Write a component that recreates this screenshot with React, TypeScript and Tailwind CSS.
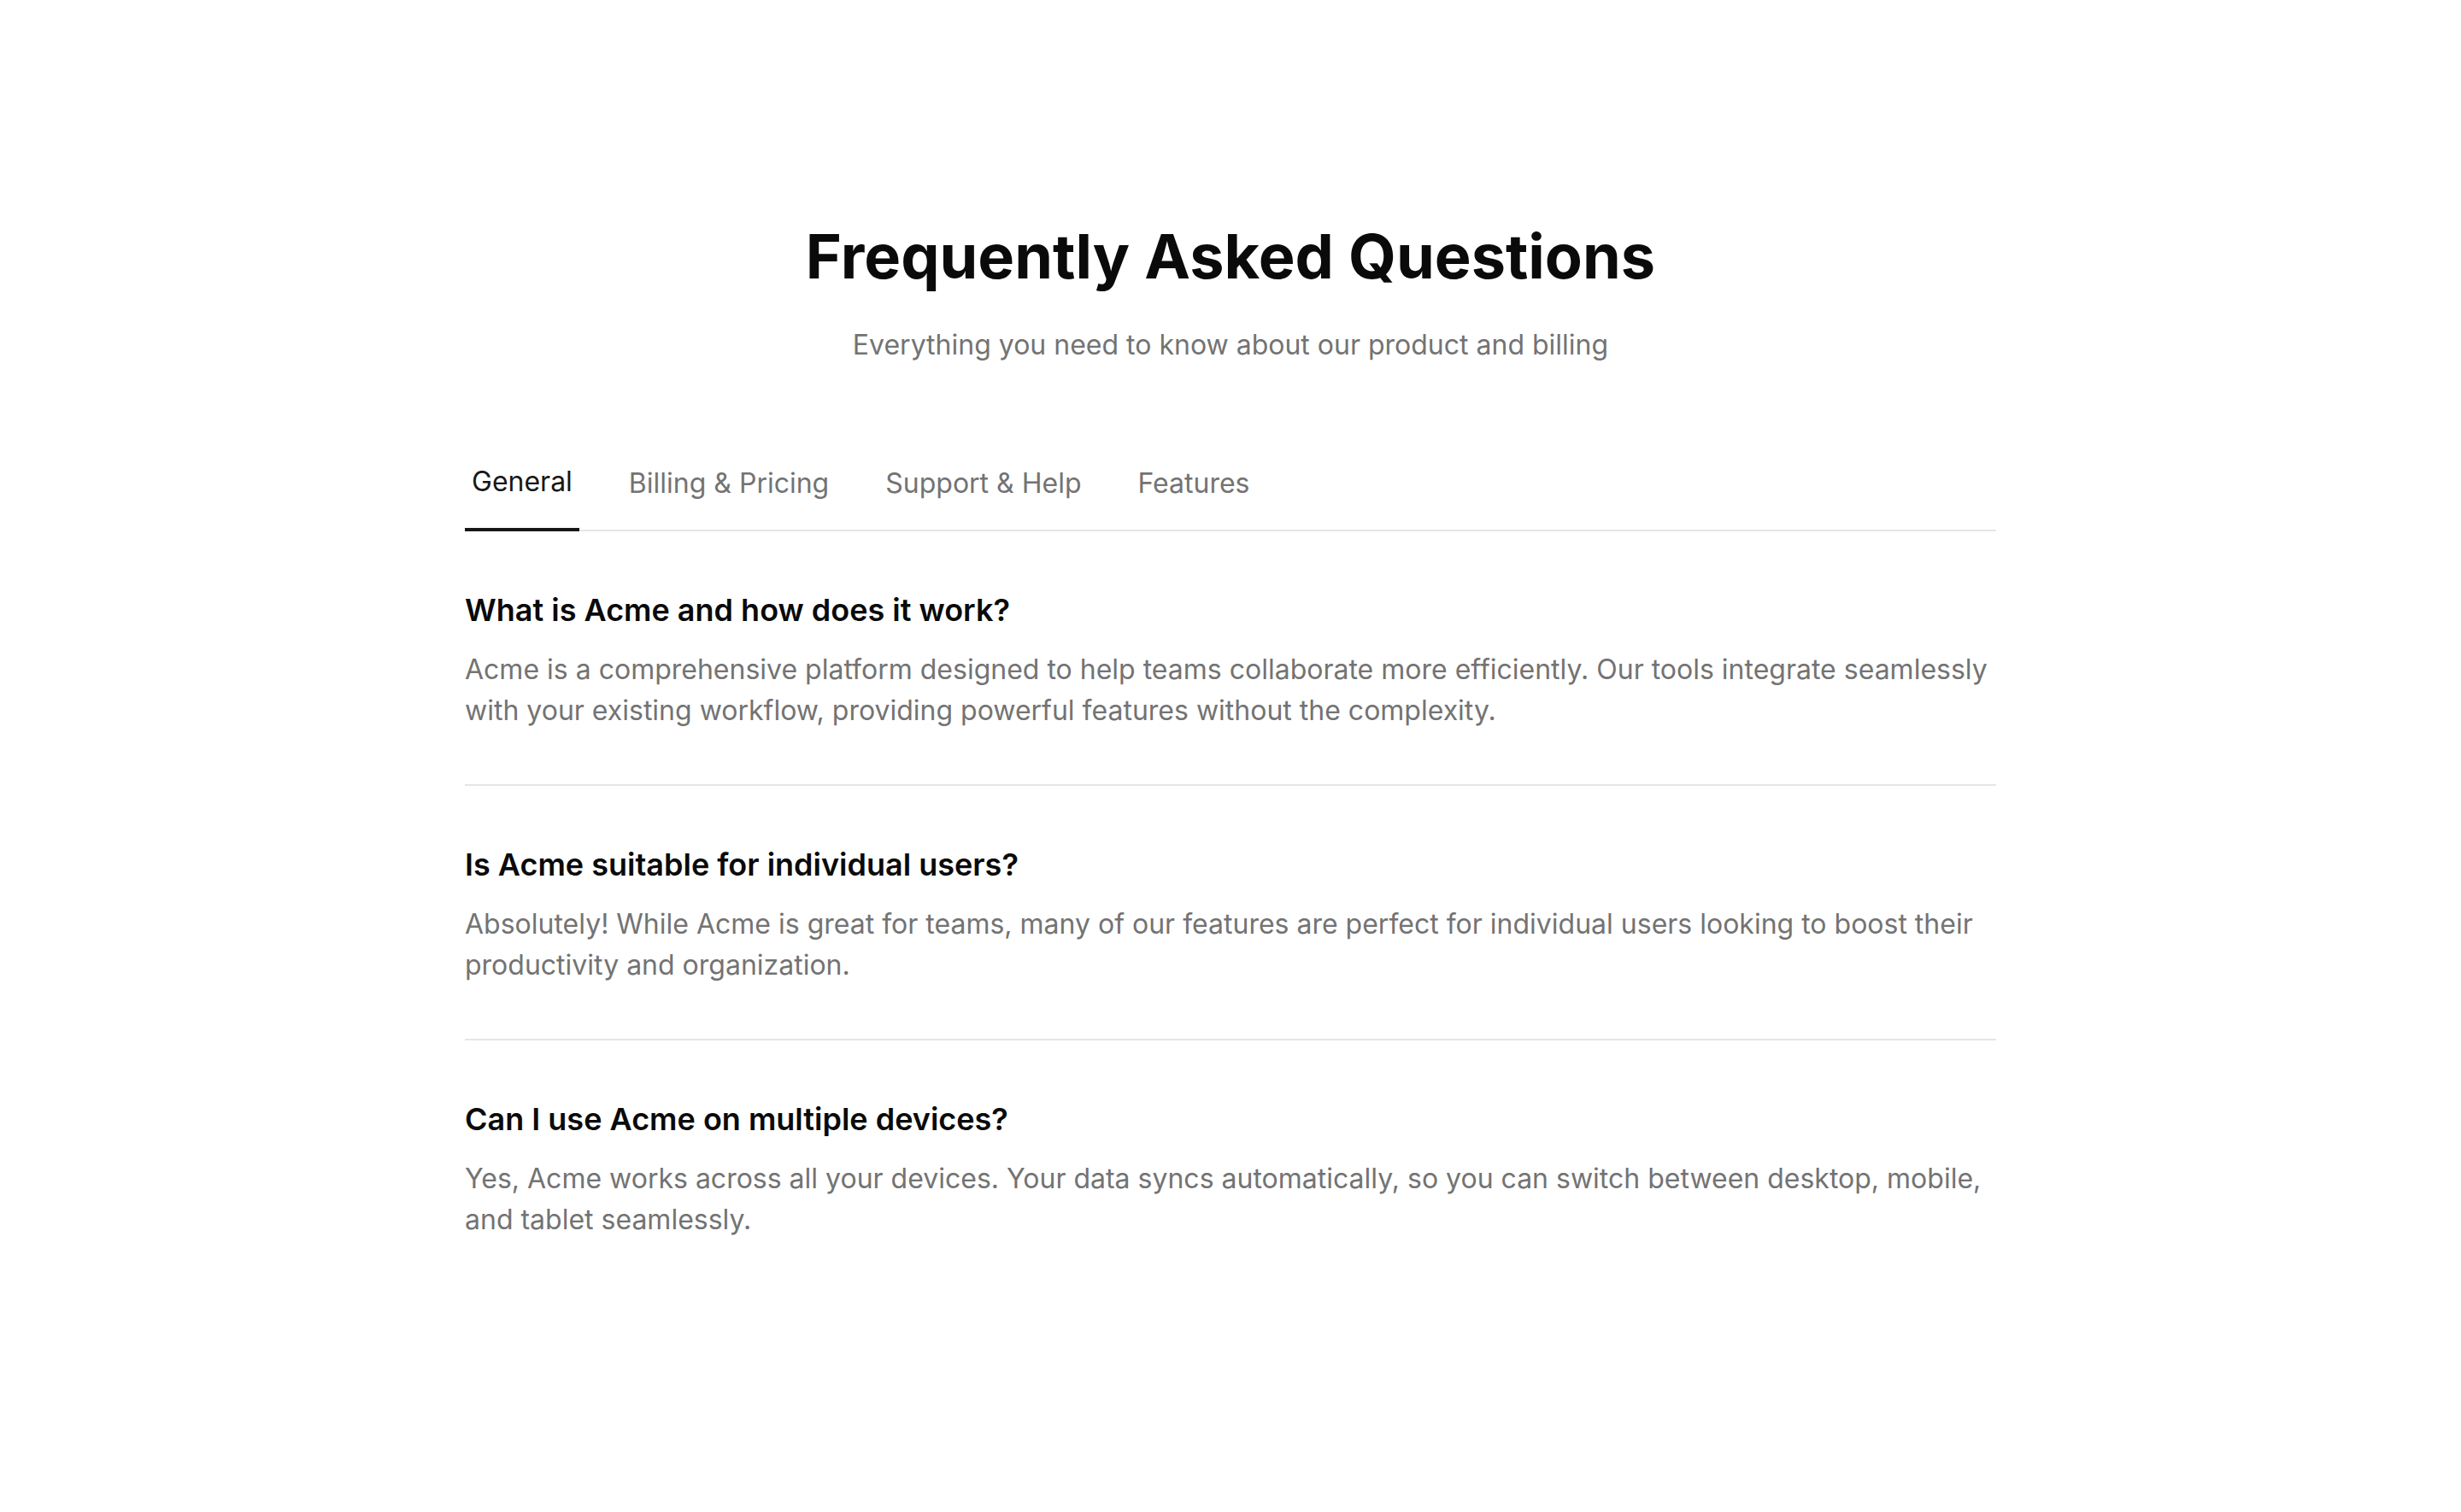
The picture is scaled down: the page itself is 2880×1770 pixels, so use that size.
import { useState } from 'react';

const tabs = ['General', 'Billing & Pricing', 'Support & Help', 'Features'];

const faqs: Record<string, { q: string; a: string }[]> = {
  General: [
    {
      q: 'What is Acme and how does it work?',
      a: 'Acme is a comprehensive platform designed to help teams collaborate more efficiently. Our tools integrate seamlessly with your existing workflow, providing powerful features without the complexity.',
    },
    {
      q: 'Is Acme suitable for individual users?',
      a: 'Absolutely! While Acme is great for teams, many of our features are perfect for individual users looking to boost their productivity and organization.',
    },
    {
      q: 'Can I use Acme on multiple devices?',
      a: 'Yes, Acme works across all your devices. Your data syncs automatically, so you can switch between desktop, mobile, and tablet seamlessly.',
    },
  ],
};

export default function App() {
  const [active, setActive] = useState('General');
  const items = faqs[active] ?? faqs.General;

  return (
    <div className="min-h-screen bg-white font-['Inter',sans-serif] antialiased">
      <div className="max-w-[1792px] mx-auto pt-[260px] pb-48">
        {/* Header */}
        <div className="text-center mb-[88px]">
          <h1 className="text-[72px] leading-[80px] font-bold text-neutral-950">
            Frequently Asked Questions
          </h1>
          <p className="mt-[40px] text-[32px] leading-[48px] text-neutral-500">
            Everything you need to know about our product and billing
          </p>
        </div>

        {/* Tabs */}
        <div className="flex gap-[50px] border-b-2 border-neutral-200">
          {tabs.map(tab => (
            <button
              key={tab}
              onClick={() => setActive(tab)}
              className={
                active === tab
                  ? 'px-2 pt-6 pb-[30px] -mb-[2px] border-b-4 border-neutral-900 text-[32px] leading-[48px] text-neutral-900'
                  : 'px-2 pt-[26px] pb-[28px] -mb-[2px] border-b-4 border-transparent text-[32px] leading-[48px] text-neutral-500 hover:text-neutral-700'
              }
            >
              {tab}
            </button>
          ))}
        </div>

        {/* Questions */}
        <div className="divide-y-2 divide-neutral-200">
          {items.map(item => (
            <div key={item.q} className="pt-16 pb-[62px]">
              <h3 className="text-[36px] leading-[56px] font-semibold text-neutral-950 mb-[18px]">{item.q}</h3>
              <p className="text-[32px] leading-[48px] text-neutral-500">{item.a}</p>
            </div>
          ))}
        </div>
      </div>
    </div>
  );
}
